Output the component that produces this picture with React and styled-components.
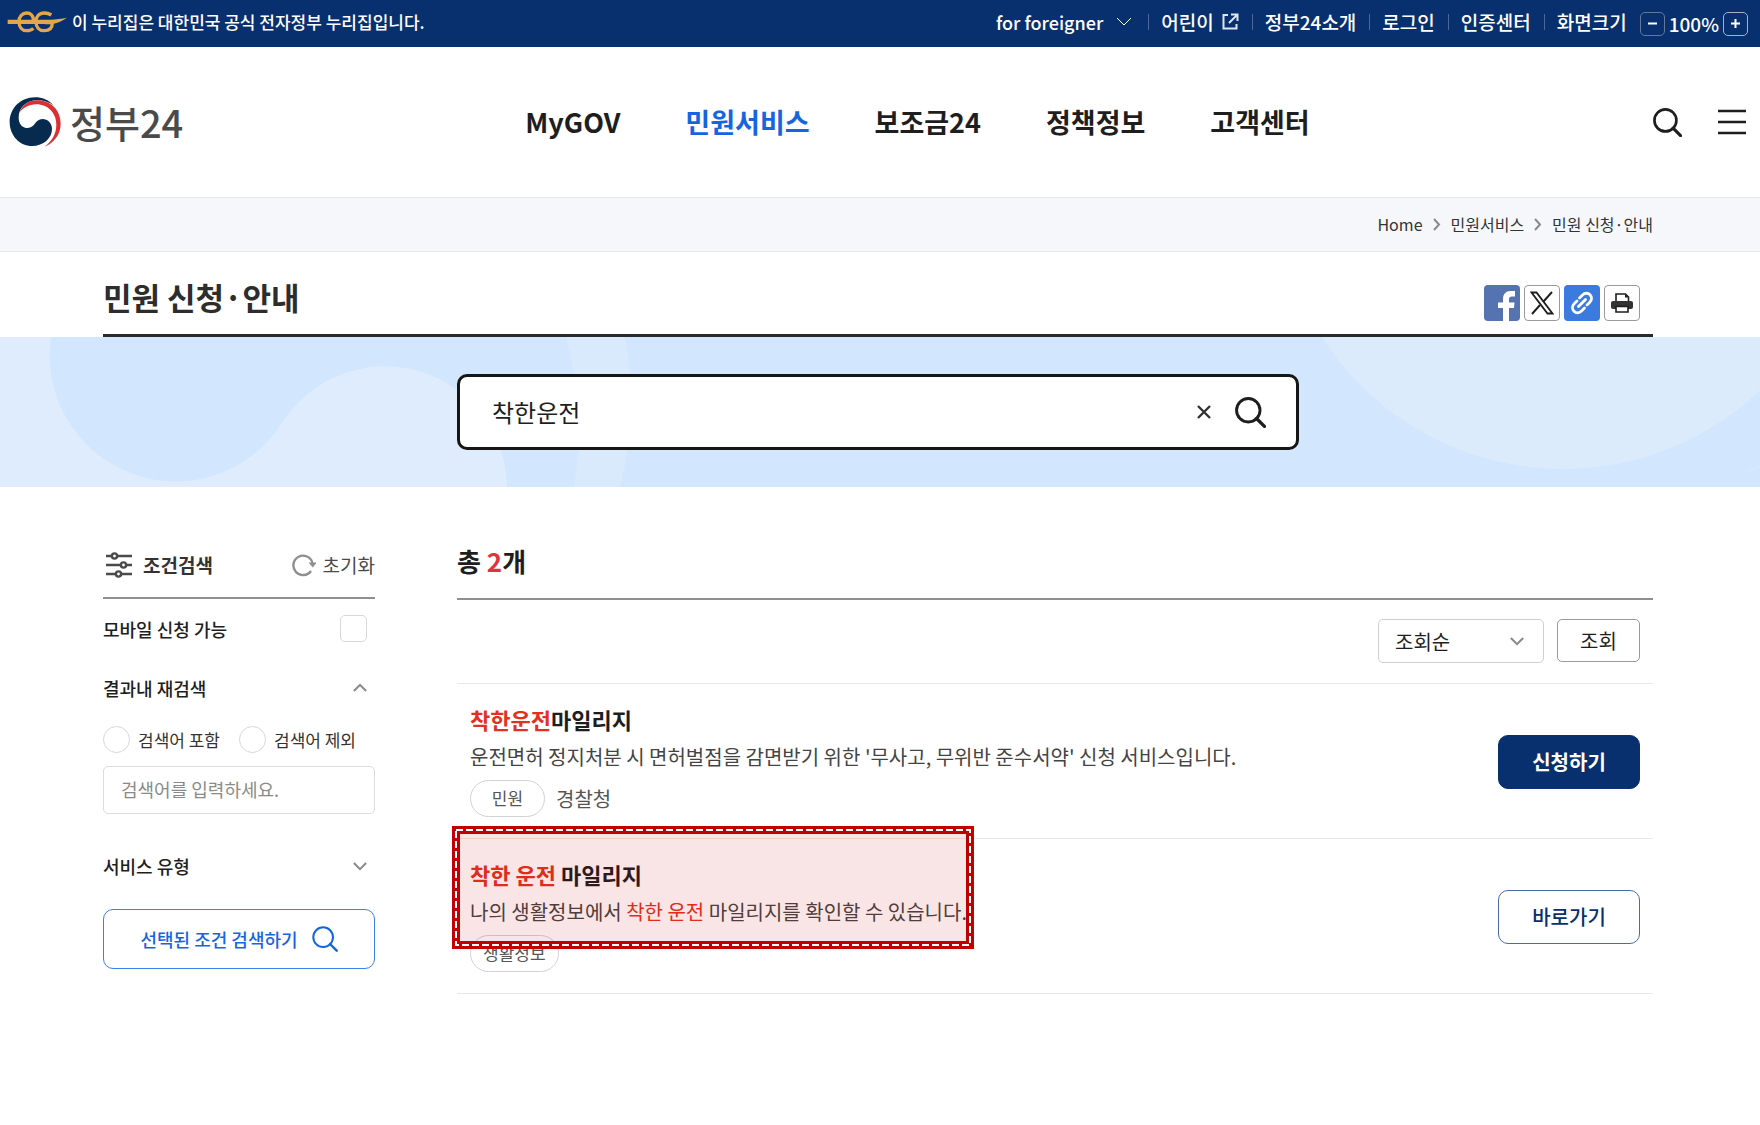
import React, { useState } from "react";
import styled, { createGlobalStyle } from "styled-components";

const GlobalStyle = createGlobalStyle`
  *, *::before, *::after {
    box-sizing: border-box;
  }
  body {
    margin: 0;
    background: #fff;
    color: #1e1e1e;
    font-family: "Noto Sans CJK KR", "Noto Sans", sans-serif;
    font-size: 19px;
  }
  h1, h2, h3, p, ul, ol {
    margin: 0;
    padding: 0;
  }
  ul, ol {
    list-style: none;
  }
  a {
    color: inherit;
    text-decoration: none;
  }
  button, input, select {
    font-family: inherit;
    color: inherit;
  }
  button {
    padding: 0;
    border: 0;
    background: none;
    cursor: pointer;
  }
  svg {
    display: block;
    flex: none;
  }
`;

const topLinks = ["정부24소개", "로그인", "인증센터"];

const menu = ["MyGOV", "민원서비스", "보조금24", "정책정보", "고객센터"];

const results = [
  {
    id: 1,
    title: [["착한운전", true], ["마일리지"]],
    desc: [
      [
        "운전면허 정지처분 시 면허벌점을 감면받기 위한 '무사고, 무위반 준수서약' 신청 서비스입니다.",
      ],
    ],
    badge: "민원",
    agency: "경찰청",
    action: "신청하기",
    filled: true,
  },
  {
    id: 2,
    title: [["착한 운전", true], [" 마일리지"]],
    desc: [
      ["나의 생활정보에서 "],
      ["착한 운전", true],
      [" 마일리지를 확인할 수 있습니다."],
    ],
    badge: "생활정보",
    action: "바로가기",
    marked: true,
  },
];

const SearchIcon = ({ size, width = 2 }) => (
  <svg width={size} height={size} viewBox="0 0 28 28" fill="none">
    <circle cx="12" cy="12" r="10.6" stroke="currentColor" strokeWidth={width} />
    <path
      d="M19.4 19.4 26.6 26.6"
      stroke="currentColor"
      strokeWidth={width + 0.4}
      strokeLinecap="round"
    />
  </svg>
);

const Chevron = ({ width = 14, stroke = 2.4, up, color = "#8a8a8a" }) => (
  <svg width={width} height={width / 2 + 2} viewBox="0 0 16 10" fill="none">
    <path
      d={up ? "M1 9 8 2 15 9" : "M1 1 8 8 15 1"}
      stroke={color}
      strokeWidth={stroke}
    />
  </svg>
);

const Crumb = () => (
  <svg width="8" height="14" viewBox="0 0 8 14" fill="none">
    <path d="M1 2 6 7.5 1 13" stroke="#8a8a8a" strokeWidth="2" />
  </svg>
);

const EgLogo = () => (
  <svg width="60" height="24" viewBox="22 34 180 72" fill="none">
    <path
      d="M24 63H150C170 62 185 60 202 57C188 67 172 75 152 76H24Z"
      fill="#e2a74c"
    />
    <path
      d="M101 66C102 50 92 43 81 43C68 43 58 54 58 69C58 86 68 96 81 96C90 96 96 94 101 89"
      stroke="#e2a74c"
      strokeWidth="10"
    />
    <path
      d="M155 49C149 45 142 43 134 43C118 43 109 54 109 69C109 86 119 96 133 96C149 96 158 88 158 72H136"
      stroke="#e2a74c"
      strokeWidth="10"
    />
  </svg>
);

const GovLogo = () => (
  <svg width="52" height="50" viewBox="26 292 156 150">
    <path
      d="M160 318C145 300 125 293 104 293C60 293 28 327 28 367C28 408 58 439 95 439C130 439 155 415 155 388C155 370 142 358 126 358C104 358 104 385 82 385C66 385 55 373 55 354C55 322 80 302 110 302C130 302 148 308 160 318Z"
      fill="#072b4f"
    />
    <path
      d="M57 340C66 315 85 302 110 302C150 302 181 330 181 372C181 405 160 430 132 441C155 425 168 402 168 375C168 340 142 314 108 314C85 314 67 325 57 340Z"
      fill="#dc2f33"
    />
  </svg>
);

const BannerArt = () => (
  <Backdrop viewBox="0 0 1760 150" preserveAspectRatio="xMidYMid slice">
    <path
      d="M0 0H51A126 126 0 0 0 282 86A122 122 0 0 1 507 150H0Z"
      fill="#dfecfd"
    />
    <path d="M566 0Q586 75 574 150H620Q640 75 625 0Z" fill="#d9eafc" />
    <circle cx="1563" cy="-154" r="286" fill="#dcebfc" />
    <path d="M1738 139 1760 128V130Z" fill="#dcebfc" />
  </Backdrop>
);

const Highlight = ({ parts }) =>
  parts.map(([text, hit]) => (hit ? <Hit key={text}>{text}</Hit> : text));

const Result = ({ item }) => (
  <ResultRow>
    <div>
      <ResultTitle>
        <Highlight parts={item.title} />
      </ResultTitle>
      <ResultDesc>
        <Highlight parts={item.desc} />
      </ResultDesc>
      <Tags>
        <Badge>{item.badge}</Badge>
        {item.agency && <Agency>{item.agency}</Agency>}
      </Tags>
    </div>
    <ActionButton type="button" $filled={item.filled}>
      {item.action}
    </ActionButton>
    {item.marked && (
      <Marker aria-hidden="true">
        <MarkerEdge stroke="#c00000" strokeWidth="8" />
        <MarkerEdge stroke="#fff" strokeWidth="2" strokeDasharray="7 3" />
      </Marker>
    )}
  </ResultRow>
);

const App = () => {
  const [query, setQuery] = useState("착한운전");
  const [zoom, setZoom] = useState(100);

  return (
    <>
      <GlobalStyle />
      <TopBar>
        <Official>
          <EgLogo />이 누리집은 대한민국 공식 전자정부 누리집입니다.
        </Official>
        <TopMenu>
          <TopItem>
            <Foreign type="button">
              for foreigner
              <Chevron width={16} stroke={1} color="#fff" />
            </Foreign>
          </TopItem>
          <TopItem>
            <TopLink href="#kids">
              어린이
              <svg width="17" height="17" viewBox="0 0 17 17" fill="none">
                <path
                  d="M6 2H1.5V15.5H14.5V11M9 1.5H15.5V8M15 2 7 10"
                  stroke="#dfe5ef"
                  strokeWidth="2"
                />
              </svg>
            </TopLink>
          </TopItem>
          {topLinks.map((el) => (
            <TopItem key={el}>
              <TopLink href="#top">{el}</TopLink>
            </TopItem>
          ))}
          <TopItem>화면크기</TopItem>
        </TopMenu>
        <Zoom>
          <ZoomButton
            type="button"
            aria-label="축소"
            onClick={() => setZoom(zoom - 10)}
          >
            <svg width="11" height="11" viewBox="0 0 11 11">
              <path d="M1 5.5H10" stroke="#fff" strokeWidth="2" />
            </svg>
          </ZoomButton>
          {zoom}%
          <ZoomButton
            type="button"
            aria-label="확대"
            $bright
            onClick={() => setZoom(zoom + 10)}
          >
            <svg width="11" height="11" viewBox="0 0 11 11">
              <path d="M1 5.5H10M5.5 1V10" stroke="#fff" strokeWidth="2" />
            </svg>
          </ZoomButton>
        </Zoom>
      </TopBar>

      <Header>
        <Brand href="#home">
          <GovLogo />
          정부24
        </Brand>
        <Nav>
          {menu.map((el) => (
            <NavLink key={el} href="#menu" $active={el === "민원서비스"}>
              {el}
            </NavLink>
          ))}
        </Nav>
        <HeaderTools>
          <button type="button" aria-label="검색">
            <SearchIcon size={29} width={2.6} />
          </button>
          <button type="button" aria-label="전체메뉴">
            <svg width="28" height="26" viewBox="0 0 28 26">
              <path
                d="M0 2H28M0 13H28M0 24H28"
                stroke="#1e1e1e"
                strokeWidth="2.6"
              />
            </svg>
          </button>
        </HeaderTools>
      </Header>

      <Breadcrumb aria-label="현재 위치">
        <a href="#home">Home</a>
        <Crumb />
        <a href="#service">민원서비스</a>
        <Crumb />
        <a href="#apply">민원 신청·안내</a>
      </Breadcrumb>

      <TitleArea>
        <TitleRow>
          <PageTitle>민원 신청·안내</PageTitle>
          <Share>
            <ShareButton type="button" aria-label="페이스북" $bg="#5673b1">
              <svg width="36" height="36" viewBox="0 0 36 36">
                <path
                  d="M19 36V23H14V17.5H19V14C19 9 22 6 26.5 6H31V11.5H28C25.5 11.5 25 12.5 25 14.5V17.5H30.5L30 23H25V36Z"
                  fill="#fff"
                />
              </svg>
            </ShareButton>
            <ShareButton type="button" aria-label="X" $line>
              <svg width="24" height="24" viewBox="0 0 24 24" fill="none">
                <path
                  d="M1.5 1.5H6.5L22.5 22.5H17.5Z"
                  stroke="#1e1e1e"
                  strokeWidth="1.8"
                />
                <path
                  d="M22 1 13.5 10.5M10 14 2 23"
                  stroke="#1e1e1e"
                  strokeWidth="1.9"
                />
              </svg>
            </ShareButton>
            <ShareButton type="button" aria-label="링크 복사" $bg="#3b7ade">
              <svg
                width="24"
                height="24"
                viewBox="0 0 24 24"
                fill="none"
                stroke="#fff"
                strokeWidth="2.8"
                strokeLinecap="round"
              >
                <path d="M9.5 7 12.5 4C14.8 1.7 18 1.7 20 3.7C22 5.7 22 9 19.8 11.2L17 14" />
                <path d="M14.5 17 11.5 20C9.2 22.3 6 22.3 4 20.3C2 18.3 2 15 4.2 12.8L7 10" />
                <path d="M8.5 15.5 15.5 8.5" />
              </svg>
            </ShareButton>
            <ShareButton type="button" aria-label="인쇄" $line>
              <svg width="22" height="20" viewBox="0 0 22 20">
                <path
                  d="M5 8V1H14.5L17.5 4V8"
                  fill="none"
                  stroke="#1e1e1e"
                  strokeWidth="1.6"
                />
                <path d="M14 1V4.5H17.5" fill="#1e1e1e" />
                <rect y="8" width="22" height="8" rx="2" fill="#333" />
                <path
                  d="M5 13.5H17V19H5Z"
                  fill="#fff"
                  stroke="#1e1e1e"
                  strokeWidth="1.6"
                />
              </svg>
            </ShareButton>
          </Share>
        </TitleRow>
      </TitleArea>

      <Banner>
        <BannerArt />
        <SearchBox role="search">
          <SearchInput
            type="text"
            aria-label="검색어"
            value={query}
            onChange={(e) => setQuery(e.target.value)}
          />
          <button
            type="button"
            aria-label="지우기"
            onClick={() => setQuery("")}
          >
            <svg width="14" height="14" viewBox="0 0 14 14">
              <path d="M1 1 13 13M13 1 1 13" stroke="#333" strokeWidth="2.4" />
            </svg>
          </button>
          <button type="button" aria-label="검색">
            <SearchIcon size={31} width={2.6} />
          </button>
        </SearchBox>
      </Banner>

      <Content>
        <Sidebar>
          <FilterHead>
            <FilterTitle>
              <svg
                width="26"
                height="26"
                viewBox="0 0 26 26"
                fill="#fff"
                stroke="#4a4a4a"
                strokeWidth="2.4"
              >
                <path d="M0 4H26M0 13H26M0 22H26" />
                <circle cx="8.5" cy="4" r="2.6" />
                <circle cx="17.5" cy="13" r="2.6" />
                <circle cx="12.5" cy="22" r="2.6" />
              </svg>
              조건검색
            </FilterTitle>
            <Reset type="button">
              <svg width="24" height="24" viewBox="0 0 24 24" fill="none">
                <path
                  d="M20.5 10A9.7 9.7 0 1 0 19 18"
                  stroke="#8f8f8f"
                  strokeWidth="2.4"
                />
                <path d="M16.5 9.5H24.5L20.8 14.5Z" fill="#8f8f8f" />
              </svg>
              초기화
            </Reset>
          </FilterHead>
          <FilterRow as="label">
            모바일 신청 가능
            <Check type="checkbox" />
          </FilterRow>
          <FilterRow as="button" type="button" aria-expanded="true">
            결과내 재검색
            <Chevron up />
          </FilterRow>
          <Radios>
            <RadioLabel>
              <Radio type="radio" name="within" />
              검색어 포함
            </RadioLabel>
            <RadioLabel>
              <Radio type="radio" name="within" />
              검색어 제외
            </RadioLabel>
          </Radios>
          <Keyword
            type="text"
            aria-label="결과내 검색어"
            placeholder="검색어를 입력하세요."
          />
          <FilterRow as="button" type="button" aria-expanded="false" $tall>
            서비스 유형
            <Chevron />
          </FilterRow>
          <FilterSubmit type="button">
            선택된 조건 검색하기
            <SearchIcon size={26} width={2.2} />
          </FilterSubmit>
        </Sidebar>

        <Main>
          <Total>
            총 <Count>2</Count>개
          </Total>
          <SortBar>
            <SelectWrap>
              <Select aria-label="정렬" defaultValue="조회순">
                <option>조회순</option>
                <option>정확도순</option>
              </Select>
              <SelectArrow>
                <Chevron />
              </SelectArrow>
            </SelectWrap>
            <SortButton type="button">조회</SortButton>
          </SortBar>
          <ul>
            {results.map((el) => (
              <Result key={el.id} item={el} />
            ))}
          </ul>
        </Main>
      </Content>
    </>
  );
};

export default App;

const TopBar = styled.div`
  display: flex;
  align-items: center;
  height: 47px;
  padding: 0 12px 4px 7px;
  background: #08306e;
  color: #fff;
  font-weight: 500;
  line-height: 24px;
`;

const Official = styled.p`
  display: flex;
  align-items: center;
  gap: 5px;
  margin-right: auto;
  font-size: 17px;
`;

const TopMenu = styled.ul`
  display: flex;
`;

const TopItem = styled.li`
  display: flex;
  align-items: center;
  padding: 0 13px;

  & + & {
    background: linear-gradient(#4a689a, #4a689a) left center / 1px 16px
      no-repeat;
  }
`;

const TopLink = styled.a`
  display: flex;
  align-items: center;
  gap: 8px;
`;

const Foreign = styled.button`
  display: flex;
  align-items: center;
  gap: 13px;
  padding-right: 3px;
  font-size: 18px;
  font-weight: 500;
`;

const Zoom = styled.div`
  display: flex;
  align-items: center;
  gap: 4px;
  padding-top: 4px;
`;

const ZoomButton = styled.button`
  display: grid;
  place-items: center;
  width: 25px;
  height: 24px;
  border: 1px solid ${(p) => (p.$bright ? "#a3b2cb" : "#62779e")};
  border-radius: 5px;
`;

const Header = styled.header`
  display: grid;
  grid-template-columns: 1fr auto 1fr;
  align-items: center;
  height: 150px;
  padding: 0 14px 0 9px;
`;

const Brand = styled.a`
  display: flex;
  align-items: center;
  gap: 9px;
  color: #4a4a4a;
  font-size: 38px;
  font-weight: 500;
  line-height: 48px;
`;

const Nav = styled.nav`
  display: flex;
  gap: 65px;
  padding-left: 80px;
  font-size: 27px;
  font-weight: 700;
  line-height: 40px;
`;

const NavLink = styled.a`
  color: ${(p) => (p.$active ? "#1565e0" : "#1e1e1e")};
`;

const HeaderTools = styled.div`
  display: flex;
  align-items: center;
  justify-content: flex-end;
  gap: 36px;
`;

const Breadcrumb = styled.nav`
  display: flex;
  align-items: center;
  justify-content: flex-end;
  gap: 10px;
  height: 55px;
  padding: 0 107px 2px 103px;
  border: solid #e6e8ec;
  border-width: 1px 0;
  background: #f5f7fb;
  color: #333;
  font-size: 16px;
  line-height: 24px;
`;

const TitleArea = styled.div`
  padding: 0 107px 0 103px;
`;

const TitleRow = styled.div`
  display: flex;
  align-items: flex-end;
  justify-content: space-between;
  height: 85px;
  padding-bottom: 13px;
  border-bottom: 3px solid #2a2a2a;
`;

const PageTitle = styled.h1`
  color: #2d2d2d;
  font-size: 31px;
  font-weight: 700;
  line-height: 48px;
`;

const Share = styled.div`
  display: flex;
  gap: 4px;
  padding-right: 13px;
`;

const ShareButton = styled.button`
  display: grid;
  place-items: center;
  width: 36px;
  height: 36px;
  border: ${(p) => (p.$line ? "1px solid #9a9a9a" : "0")};
  border-radius: 4px;
  background: ${(p) => p.$bg || "#fff"};
`;

const Banner = styled.section`
  position: relative;
  display: flex;
  justify-content: center;
  padding: 37px 107px 37px 103px;
  background: #d2e6fe;
`;

const Backdrop = styled.svg`
  position: absolute;
  inset: 0;
  width: 100%;
  height: 100%;
`;

const SearchBox = styled.form`
  position: relative;
  display: flex;
  align-items: center;
  gap: 24px;
  width: 842px;
  height: 76px;
  padding: 0 30px 0 32px;
  border: 3px solid #161616;
  border-radius: 10px;
  background: #fff;
`;

const SearchInput = styled.input`
  flex: 1;
  min-width: 0;
  padding: 0;
  border: 0;
  outline: 0;
  background: none;
  font-size: 24px;
  line-height: 36px;
`;

const Content = styled.div`
  display: flex;
  gap: 82px;
  padding: 47px 107px 80px 103px;
`;

const Sidebar = styled.aside`
  display: flex;
  flex-direction: column;
  width: 272px;
`;

const FilterHead = styled.div`
  display: flex;
  align-items: center;
  justify-content: space-between;
  height: 65px;
  padding: 0 0 2px 3px;
  border-bottom: 2px solid #8f8f8f;
`;

const FilterTitle = styled.h2`
  display: flex;
  align-items: center;
  gap: 11px;
  color: #333;
  font-size: 19px;
  font-weight: 700;
`;

const Reset = styled.button`
  display: flex;
  align-items: center;
  gap: 7px;
  color: #4a4a4a;
  font-size: 19px;
`;

const FilterRow = styled.div`
  display: flex;
  align-items: center;
  justify-content: space-between;
  height: ${(p) => (p.$tall ? 95 : 59)}px;
  padding: ${(p) => (p.$tall ? 9 : 0)}px 8px 0 0;
  color: #1e1e1e;
  font-size: 18px;
  font-weight: 500;
  text-align: left;
`;

const Check = styled.input`
  appearance: none;
  width: 27px;
  height: 27px;
  margin: 0;
  border: 1px solid #d8d8d8;
  border-radius: 5px;
  background: #fff;

  &:checked {
    background: #1565e0;
  }
`;

const Radios = styled.div`
  display: grid;
  grid-template-columns: 1fr 1fr;
  height: 44px;
  margin-bottom: 5px;
`;

const RadioLabel = styled.label`
  display: flex;
  align-items: center;
  gap: 8px;
  color: #333;
  font-size: 17px;
`;

const Radio = styled(Check)`
  border-radius: 50%;
`;

const Keyword = styled.input`
  width: 100%;
  height: 48px;
  padding: 0 17px 2px;
  border: 1px solid #dcdcdc;
  border-radius: 5px;
  font-size: 18px;

  &::placeholder {
    color: #8a8a8a;
  }
`;

const FilterSubmit = styled.button`
  display: flex;
  align-items: center;
  justify-content: center;
  gap: 14px;
  height: 60px;
  border: 1px solid #3b82e6;
  border-radius: 10px;
  color: #1565e0;
  font-size: 18px;
  font-weight: 500;
`;

const Main = styled.main`
  flex: 1;
  min-width: 0;
`;

const Total = styled.h2`
  height: 66px;
  border-bottom: 2px solid #8f8f8f;
  font-size: 26px;
  font-weight: 700;
  line-height: 54px;
`;

const Count = styled.span`
  color: #e0343a;
`;

const SortBar = styled.div`
  display: flex;
  justify-content: flex-end;
  gap: 13px;
  padding: 19px 13px 20px;
  border-bottom: 1px solid #e8e8e8;
`;

const SelectWrap = styled.div`
  position: relative;
  width: 166px;
`;

const Select = styled.select`
  appearance: none;
  width: 100%;
  height: 44px;
  padding: 0 16px;
  border: 1px solid #cfcfcf;
  border-radius: 5px;
  background: #fff;
  font-size: 20px;
`;

const SelectArrow = styled.span`
  position: absolute;
  top: 18px;
  right: 20px;
  pointer-events: none;
`;

const SortButton = styled.button`
  width: 83px;
  height: 43px;
  border: 1px solid #9a9a9a;
  border-radius: 5px;
  font-size: 20px;
`;

const ResultRow = styled.li`
  position: relative;
  display: flex;
  align-items: center;
  justify-content: space-between;
  padding: 17px 13px 21px;
  border-bottom: 1px solid #e8e8e8;
`;

const ResultTitle = styled.h3`
  font-size: 22px;
  font-weight: 700;
  line-height: 36px;
`;

const ResultDesc = styled.p`
  margin: 5px 0 8px;
  color: #444;
  font-size: 20px;
  line-height: 30px;
`;

const Hit = styled.span`
  color: #e2311f;
`;

const Tags = styled.div`
  display: flex;
  align-items: center;
  gap: 11px;
  height: 37px;
`;

const Badge = styled.span`
  min-width: 75px;
  height: 37px;
  padding: 0 12px;
  border: 1px solid #d2d2d2;
  border-radius: 19px;
  color: #555;
  font-size: 17px;
  line-height: 34px;
  text-align: center;
`;

const Agency = styled.span`
  color: #555;
  font-size: 20px;
  line-height: 34px;
`;

const ActionButton = styled.button`
  width: 142px;
  height: 54px;
  margin-top: 5px;
  border: 1px solid ${(p) => (p.$filled ? "#08306e" : "#4a6ba3")};
  border-radius: 10px;
  background: ${(p) => (p.$filled ? "#08306e" : "#fff")};
  color: ${(p) => (p.$filled ? "#fff" : "#08306e")};
  font-size: 20px;
  font-weight: ${(p) => (p.$filled ? 700 : 500)};
`;

const Marker = styled.svg`
  position: absolute;
  top: -13px;
  left: -5px;
  width: 522px;
  height: 123px;
  background: rgba(192, 0, 0, 0.1);
  pointer-events: none;
`;

const MarkerEdge = styled.rect`
  x: 4px;
  y: 4px;
  width: calc(100% - 8px);
  height: calc(100% - 8px);
  fill: none;
`;
